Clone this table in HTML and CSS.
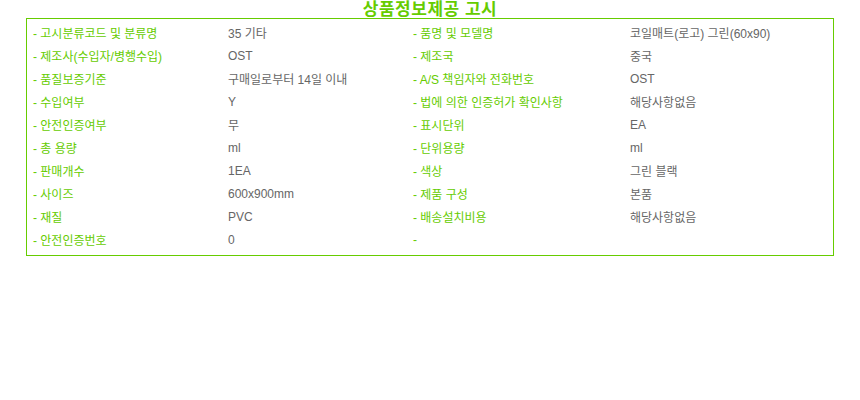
FILE: index.html
```html
<!DOCTYPE html>
<html lang="ko">
<head>
  <meta charset="UTF-8">
  <title>상품정보제공 고시</title>
  <link rel="stylesheet" href="styles.css">
</head>
<body>
  <div class="notice">
    <h2 class="notice-title">상품정보제공 고시</h2>
    <table class="notice-table">
      <colgroup>
        <col class="c1"><col class="c2"><col class="c3"><col class="c4">
      </colgroup>
      <tr>
        <th>- 고시분류코드 및 분류명</th><td>35 기타</td>
        <th>- 품명 및 모델명</th><td>코일매트(로고) 그린(60x90)</td>
      </tr>
      <tr>
        <th>- 제조사(수입자/병행수입)</th><td>OST</td>
        <th>- 제조국</th><td>중국</td>
      </tr>
      <tr>
        <th>- 품질보증기준</th><td>구매일로부터 14일 이내</td>
        <th>- A/S 책임자와 전화번호</th><td>OST</td>
      </tr>
      <tr>
        <th>- 수입여부</th><td>Y</td>
        <th>- 법에 의한 인증허가 확인사항</th><td>해당사항없음</td>
      </tr>
      <tr>
        <th>- 안전인증여부</th><td>무</td>
        <th>- 표시단위</th><td>EA</td>
      </tr>
      <tr>
        <th>- 총 용량</th><td>ml</td>
        <th>- 단위용량</th><td>ml</td>
      </tr>
      <tr>
        <th>- 판매개수</th><td>1EA</td>
        <th>- 색상</th><td>그린 블랙</td>
      </tr>
      <tr>
        <th>- 사이즈</th><td>600x900mm</td>
        <th>- 제품 구성</th><td>본품</td>
      </tr>
      <tr>
        <th>- 재질</th><td>PVC</td>
        <th>- 배송설치비용</th><td>해당사항없음</td>
      </tr>
      <tr>
        <th>- 안전인증번호</th><td>0</td>
        <th>-</th><td></td>
      </tr>
    </table>
  </div>
</body>
</html>
```

FILE: styles.css
```css
body {
  margin: 0;
  font-family: "Liberation Sans", "Noto Sans CJK KR", sans-serif;
  font-size: 12px;
  color: #666;
  background: #fff;
}
.notice {
  width: 808px;
  margin: 0 auto;
}
.notice-title {
  margin: 0;
  height: 18px;
  line-height: 20px;
  text-align: center;
  font-size: 17px;
  font-weight: bold;
  letter-spacing: 0.5px;
  color: #66cc00;
}
.notice-table {
  width: 100%;
  border: 1px solid #66cc00;
  border-collapse: separate;
  border-spacing: 0;
  padding: 2px 0 4px;
  table-layout: fixed;
}
.notice-table .c1 { width: 201px; }
.notice-table .c2 { width: 179px; }
.notice-table .c3 { width: 223px; }
.notice-table th,
.notice-table td {
  height: 23px;
  padding: 0;
  text-align: left;
  font-weight: normal;
  white-space: nowrap;
  vertical-align: middle;
}
.notice-table th {
  padding-left: 6px;
  color: #66cc00;
}
```
